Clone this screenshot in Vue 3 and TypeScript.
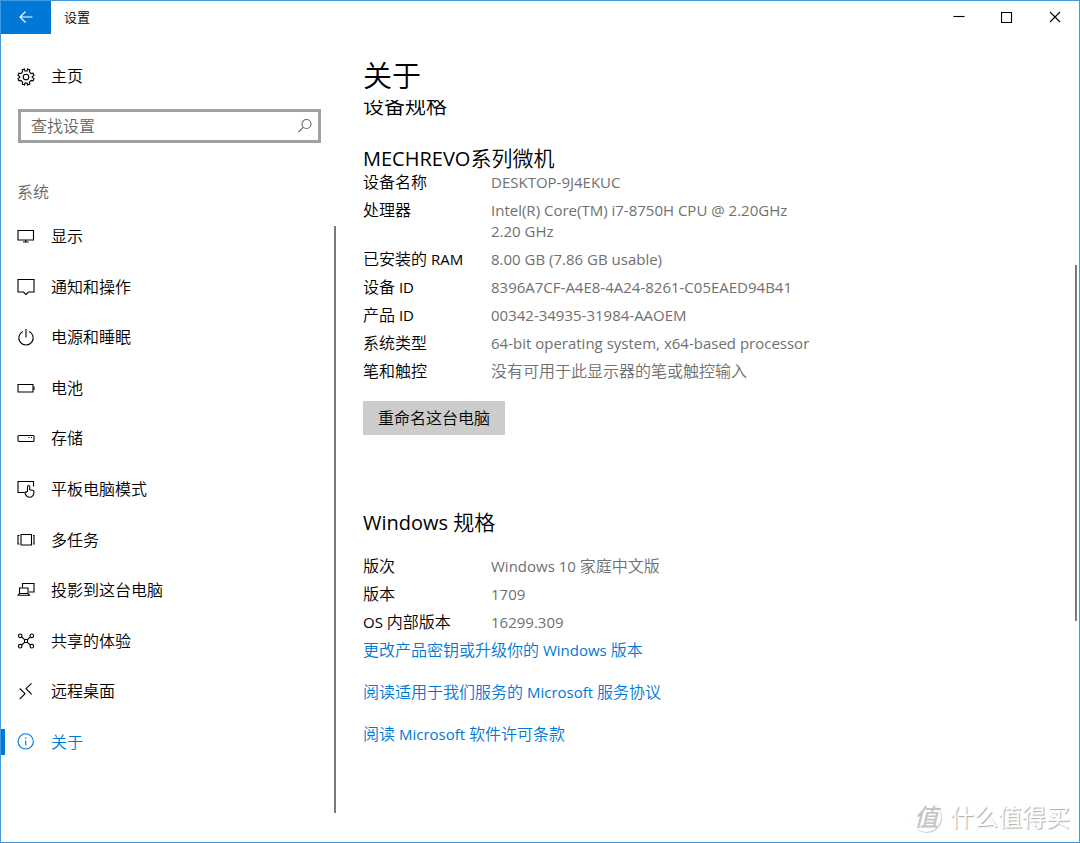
<script setup lang="ts">
import { ref } from 'vue'

interface NavItem {
  id: string
  label: string
}

interface Spec {
  label: string
  value: string
}

interface Run {
  text: string
  latin: boolean
}

const navItems: NavItem[] = [
  { id: 'display', label: '显示' },
  { id: 'notify', label: '通知和操作' },
  { id: 'power', label: '电源和睡眠' },
  { id: 'battery', label: '电池' },
  { id: 'storage', label: '存储' },
  { id: 'tablet', label: '平板电脑模式' },
  { id: 'multitask', label: '多任务' },
  { id: 'project', label: '投影到这台电脑' },
  { id: 'shared', label: '共享的体验' },
  { id: 'remote', label: '远程桌面' },
  { id: 'about', label: '关于' },
]

const deviceSpecs: Spec[] = [
  { label: '设备名称', value: 'DESKTOP-9J4EKUC' },
  { label: '处理器', value: 'Intel(R) Core(TM) i7-8750H CPU @ 2.20GHz\n2.20 GHz' },
  { label: '已安装的 RAM', value: '8.00 GB (7.86 GB usable)' },
  { label: '设备 ID', value: '8396A7CF-A4E8-4A24-8261-C05EAED94B41' },
  { label: '产品 ID', value: '00342-34935-31984-AAOEM' },
  { label: '系统类型', value: '64-bit operating system, x64-based processor' },
  { label: '笔和触控', value: '没有可用于此显示器的笔或触控输入' },
]

const windowsSpecs: Spec[] = [
  { label: '版次', value: 'Windows 10 家庭中文版' },
  { label: '版本', value: '1709' },
  { label: 'OS 内部版本', value: '16299.309' },
]

const links: string[] = [
  '更改产品密钥或升级你的 Windows 版本',
  '阅读适用于我们服务的 Microsoft 服务协议',
  '阅读 Microsoft 软件许可条款',
]

const active = ref('about')
const query = ref('')

// Latin runs are set slightly smaller than the Chinese text around them.
function runs(text: string): Run[] {
  const parts = text.match(/[\x00-\x7f]+|[^\x00-\x7f]+/g) ?? []
  return parts.map((part) => ({ text: part, latin: part.charCodeAt(0) < 128 }))
}
</script>

<template>
  <div class="window">
    <header class="titlebar">
      <button class="back" type="button" aria-label="返回">
        <svg width="16" height="14" viewBox="0 0 16 14"><path d="M14.500 7H2M7.500 1.500L2 7l5.500 5.500" /></svg>
      </button>
      <span class="caption">设置</span>
      <div class="controls">
        <button type="button" aria-label="最小化">
          <svg width="12" height="12" viewBox="0 0 12 12"><path d="M.5 5.500h11" /></svg>
        </button>
        <button type="button" aria-label="最大化">
          <svg width="12" height="12" viewBox="0 0 12 12"><path d="M.5 1.500h10v10h-10z" /></svg>
        </button>
        <button type="button" aria-label="关闭">
          <svg width="12" height="12" viewBox="0 0 12 12"><path d="M1 1l10 10M11 1L1 11" /></svg>
        </button>
      </div>
    </header>

    <div class="body">
      <aside class="sidebar">
        <a class="home" href="#home">
          <svg width="18" height="18" viewBox="0 0 18 18">
            <path d="M7.500 1l.4 1.900 1.100.100 1.100-.1L10.500 1l2.300.9-.4 2 1.700 1.700 2-.4.9 2.300-1.800 1.100v.8l1.800 1.100-.9 2.300-2-.4-1.700 1.700.4 2-2.300.9-.4-1.900-1.100-.1-1.100.1-.4 1.900-2.300-.9.4-2-1.700-1.700-2 .4L1 10.500l1.800-1.100v-.8L1 7.500l.9-2.300 2 .4 1.700-1.700-.4-2z" />
            <circle cx="9" cy="9" r="2.800" />
          </svg>
          <span>主页</span>
        </a>

        <div class="search">
          <input v-model="query" type="search" placeholder="查找设置" aria-label="查找设置" />
          <svg width="16" height="16" viewBox="0 0 16 16"><circle cx="9.500" cy="6" r="4.500" /><path d="M6.300 9.200L1.500 14" /></svg>
        </div>

        <h2 class="group">系统</h2>

        <div class="navwrap">
          <nav class="nav">
            <a
              v-for="item in navItems"
              :key="item.id"
              :href="'#' + item.id"
              :class="{ active: active === item.id }"
              @click.prevent="active = item.id"
            >
              <svg width="18" height="18" viewBox="0 0 18 18">
                <path v-if="item.id === 'display'" d="M1 3.500h15.500v9.500H1zM8.800 13v2M6 15h5.500" />
                <path v-else-if="item.id === 'notify'" d="M1 1.500h16V14h-5.500L9 16.500 6.500 14H1z" />
                <path v-else-if="item.id === 'power'" d="M9 1v8.500M5.800 3.400a7.200 7.200 0 1 0 6.400 0" />
                <g v-else-if="item.id === 'battery'">
                  <path d="M1 5.500h15v7.500H1z" />
                  <path d="M17 7.500v3.500" />
                </g>
                <g v-else-if="item.id === 'storage'">
                  <rect x="1" y="6.500" width="16" height="6" rx="1" />
                  <path d="M11.500 8.500h1M14 8.500h1" />
                </g>
                <g v-else-if="item.id === 'tablet'">
                  <path d="M7.500 12.500H1V1.500h15.500v5" />
                  <path d="M10.500 11.500V6.700c0-1.700 2.200-1.700 2.200 0v3l3 .5c1 .2 1.400.8 1.300 1.800-.2 3-1.400 5.300-4.500 5.300-2.200 0-3.500-1.300-4.500-4-.3-1.200.8-1.800 1.600-1.100z" />
                </g>
                <path v-else-if="item.id === 'multitask'" d="M4 3.500h10.500v10.500H4zM2.500 4.500H1v8.500h1.500M16 4.500h1v8.500h-1" />
                <g v-else-if="item.id === 'project'">
                  <path d="M5.500 6.500v-4H17v8.500h-5" />
                  <path d="M2.500 13V7h8.500v6M1 14.300h11.500L11 12.500H2.500z" />
                </g>
                <g v-else-if="item.id === 'shared'">
                  <circle cx="3.200" cy="3.800" r="1.800" /><circle cx="14.800" cy="3.800" r="1.800" />
                  <circle cx="3.200" cy="14.200" r="1.800" /><circle cx="14.800" cy="14.200" r="1.800" />
                  <path d="M4.600 5l3 2.700M13.400 5l-3 2.700M4.600 13l3-2.700M13.400 13l-3-2.700M7.500 7.500h3v3h-3z" />
                </g>
                <path v-else-if="item.id === 'remote'" d="M14.500 1.300L9 6.700l5.700 5.600M2.700 6.500L8 11.700l-5.300 5.500" />
                <g v-else>
                  <circle cx="8.700" cy="8.400" r="7.600" />
                  <path d="M8.700 7.400v5M8.700 4.600v1.400" />
                </g>
              </svg>
              <span>{{ item.label }}</span>
            </a>
          </nav>
          <div class="thumb"></div>
        </div>
      </aside>

      <main class="content">
        <h1>关于</h1>
        <div class="scroller">
          <h2 class="clipped">设备规格</h2>
          <h2 class="model"><span v-for="(r, i) in runs('MECHREVO系列微机')" :key="i" :class="{ latin: r.latin }">{{ r.text }}</span></h2>
          <dl class="specs">
            <template v-for="spec in deviceSpecs" :key="spec.label">
              <dt><span v-for="(r, i) in runs(spec.label)" :key="i" :class="{ latin: r.latin }">{{ r.text }}</span></dt>
              <dd><span v-for="(r, i) in runs(spec.value)" :key="i" :class="{ latin: r.latin }">{{ r.text }}</span></dd>
            </template>
          </dl>
          <button class="rename" type="button">重命名这台电脑</button>

          <h2 class="edition"><span v-for="(r, i) in runs('Windows 规格')" :key="i" :class="{ latin: r.latin }">{{ r.text }}</span></h2>
          <dl class="specs">
            <template v-for="spec in windowsSpecs" :key="spec.label">
              <dt><span v-for="(r, i) in runs(spec.label)" :key="i" :class="{ latin: r.latin }">{{ r.text }}</span></dt>
              <dd><span v-for="(r, i) in runs(spec.value)" :key="i" :class="{ latin: r.latin }">{{ r.text }}</span></dd>
            </template>
          </dl>
          <div class="links">
            <a v-for="link in links" :key="link" href="#more"><span v-for="(r, i) in runs(link)" :key="i" :class="{ latin: r.latin }">{{ r.text }}</span></a>
          </div>
        </div>
        <div class="thumb"></div>
      </main>
    </div>

    <div class="watermark">
      <span class="seal">值</span>
      <span>什么值得买</span>
    </div>
  </div>
</template>

<style>
body {
  margin: 0;
  background: #fff;
}
</style>

<style scoped>
.window {
  position: relative;
  box-sizing: border-box;
  display: flex;
  flex-direction: column;
  min-height: 100vh;
  border: 1px solid #4298dc;
  background: #fff;
  color: #000;
  font-family: "Open Sans", "Noto Sans CJK SC", sans-serif;
  font-size: 16px;
  font-weight: 350;
  line-height: 21px;
}

button,
input {
  font: inherit;
  color: inherit;
}

a {
  color: inherit;
  text-decoration: none;
}

h1,
h2,
dl,
dd {
  margin: 0;
  font-weight: inherit;
}

svg {
  flex: none;
  fill: none;
  stroke: currentColor;
  stroke-width: 1.1;
}

.latin {
  font-size: 15px;
  font-weight: 400;
}

.titlebar {
  display: flex;
  align-items: flex-start;
  height: 33px;
}

.back {
  display: grid;
  place-items: center;
  width: 50px;
  height: 33px;
  padding: 0 0 2px;
  border: 0;
  background: #0078d7;
  color: #fff;
}

.caption {
  margin-left: 13px;
  font-size: 13px;
  line-height: 32px;
}

.controls {
  display: flex;
  margin-left: auto;
}

.controls button {
  display: grid;
  place-items: center;
  width: 48px;
  height: 32px;
  padding: 0;
  border: 0;
  background: none;
}

.body {
  flex: 1;
  display: flex;
}

.sidebar {
  display: flex;
  flex-direction: column;
  width: 335px;
}

.home {
  display: flex;
  align-items: center;
  gap: 16px;
  margin: 32px 0 0 16px;
}

.search {
  display: flex;
  align-items: center;
  box-sizing: border-box;
  height: 34px;
  margin: 22px 15px 0 17px;
  padding: 0 5px 0 10px;
  border: 3px solid #a0a0a0;
  color: #666;
}

.search input {
  flex: 1;
  min-width: 0;
  padding: 0;
  border: 0;
  outline: 0;
  background: none;
}

.search input::placeholder {
  color: #666;
  opacity: 1;
}

.group {
  margin: 39px 0 0 16px;
  font-size: 16px;
  color: #666;
}

.navwrap {
  position: relative;
  flex: 1;
  display: flex;
  margin-top: 8px;
  padding-bottom: 75px;
}

.nav {
  flex: 1;
  display: flex;
  flex-direction: column;
}

.nav a {
  position: relative;
  flex: 1;
  display: flex;
  align-items: center;
  gap: 16px;
  min-height: 40px;
  padding-left: 16px;
}

.nav a span {
  padding-top: 1px;
}

.nav a.active {
  color: #0078d7;
}

.nav a.active::before {
  content: "";
  position: absolute;
  left: 0;
  width: 4px;
  height: 26px;
  background: #0078d7;
}

.thumb {
  position: absolute;
  width: 2px;
  background: #7a7a7a;
}

.navwrap .thumb {
  top: 15px;
  right: 0;
  bottom: 29px;
}

.content {
  position: relative;
  flex: 1;
  padding: 24px 0 0 27px;
}

.content > .thumb {
  top: 231px;
  right: 2px;
  bottom: 221px;
}

h1 {
  font-size: 29px;
  line-height: 36px;
}

.scroller {
  display: flow-root;
  margin-top: 6px;
  overflow: hidden;
}

.scroller h2 {
  font-size: 21px;
  line-height: 28px;
}

.scroller h2 .latin {
  font-size: 20px;
}

.scroller .clipped {
  margin-top: -9px;
}

.scroller .model {
  margin-top: 26px;
  line-height: 26px;
}

.specs {
  display: grid;
  grid-template-columns: 128px 1fr;
  row-gap: 7px;
}

.specs dt {
  white-space: nowrap;
}

.specs dd {
  color: #707070;
  white-space: pre-line;
}

.rename {
  display: block;
  height: 34px;
  margin-top: 19px;
  padding: 0 15px;
  border: 0;
  background: #ccc;
}

.scroller .edition {
  margin-top: 73px;
  margin-bottom: 19px;
}

.links {
  display: flex;
  flex-direction: column;
  align-items: flex-start;
  gap: 21px;
  margin-top: 7px;
  color: #0078d7;
}

.watermark {
  position: absolute;
  right: 9px;
  bottom: 9px;
  display: flex;
  align-items: center;
  gap: 9px;
  color: #fff;
  font-size: 24px;
  font-weight: 400;
  line-height: 32px;
  text-shadow: 1px 1px 1px #aaa;
}

.seal {
  width: 30px;
  height: 30px;
  border-radius: 50%;
  box-shadow: 1px 1px 1px #ccc;
  color: #c4c4c4;
  font-style: italic;
  font-weight: 500;
  line-height: 30px;
  text-align: center;
  text-shadow: none;
}
</style>
